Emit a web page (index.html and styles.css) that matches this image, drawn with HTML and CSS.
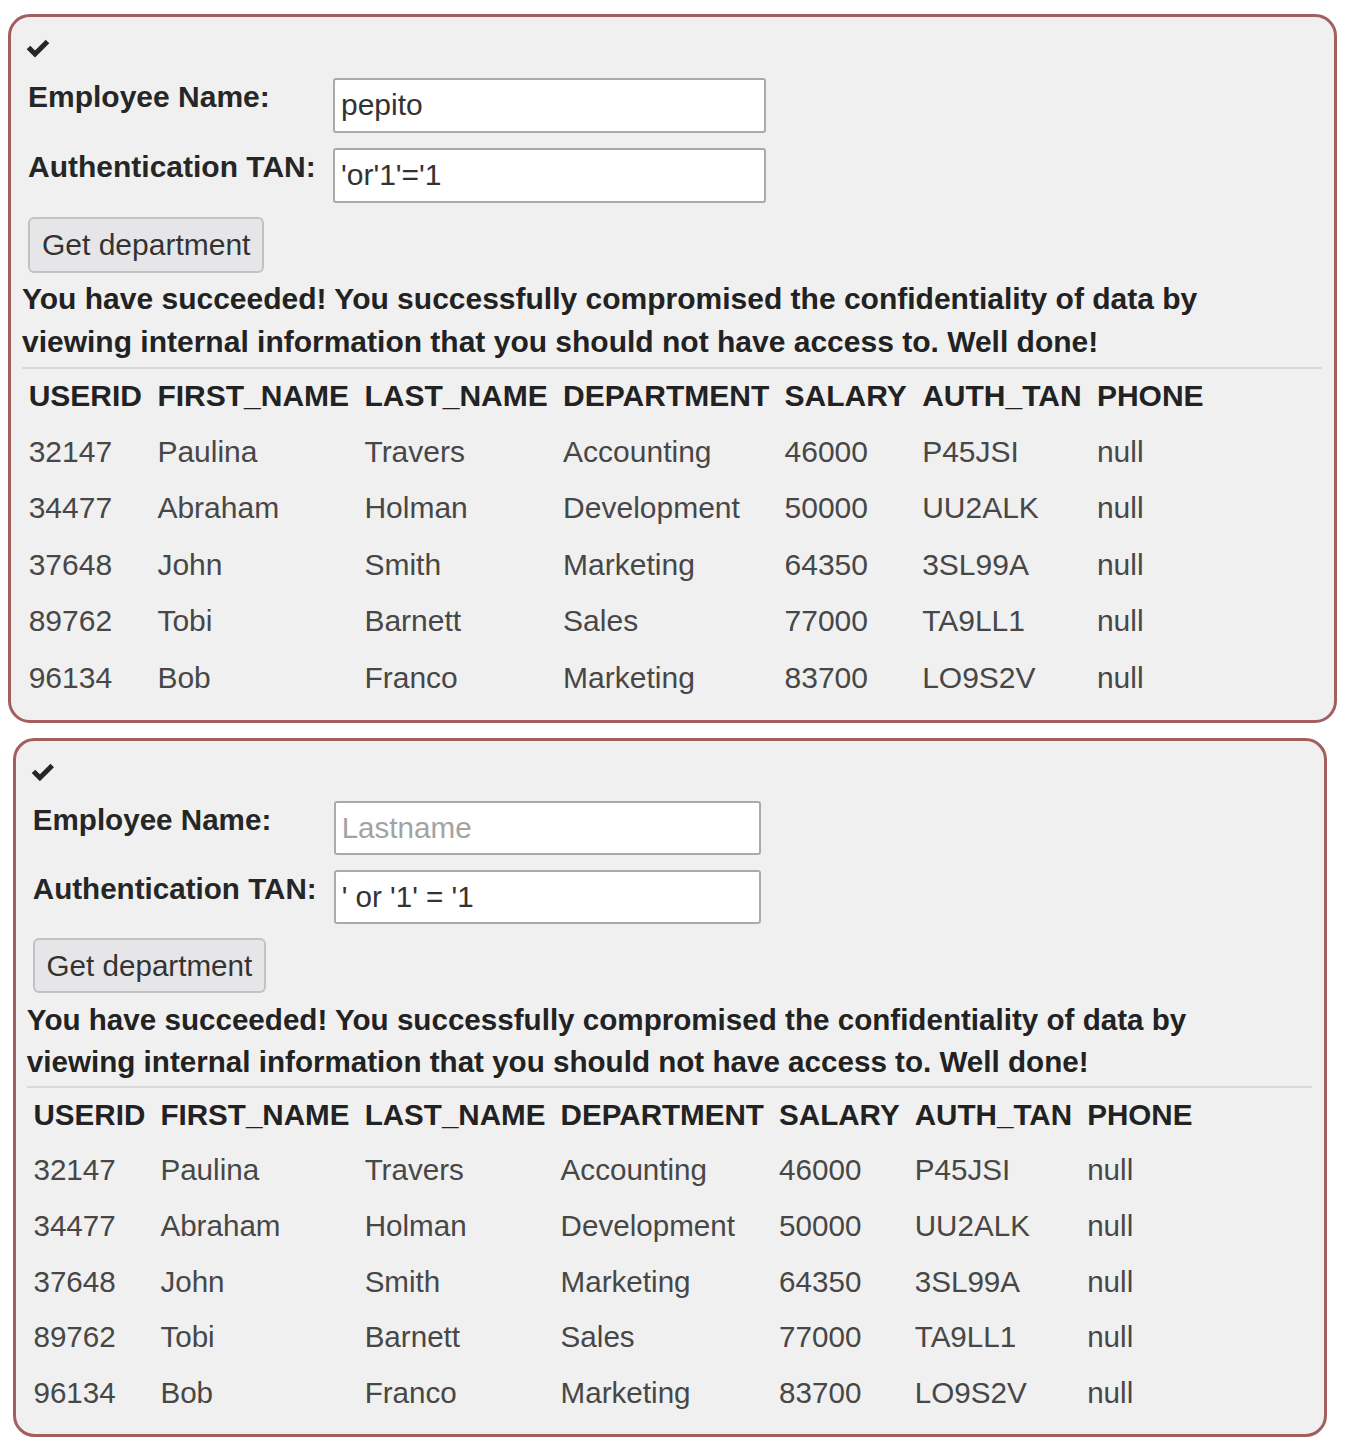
FILE: index.html
```html
<!DOCTYPE html>
<html lang="en">
<head>
<meta charset="utf-8">
<title>SQL Injection - Get department</title>
<link rel="stylesheet" href="styles.css">
</head>
<body>
<section class="panel panel-first">
  <svg class="check" viewBox="0 0 24 20" aria-hidden="true"><polyline points="2.5,9.5 9,16 21.5,3.5" fill="none" stroke="#262626" stroke-width="5" stroke-linejoin="miter"/></svg>
  <form class="form">
    <label class="label" for="n1">Employee Name:</label>
    <input class="field" id="n1" type="text" value="pepito" placeholder="Lastname">
    <label class="label" for="t1">Authentication TAN:</label>
    <input class="field" id="t1" type="text" value="'or'1'='1">
  </form>
  <button class="btn" type="button">Get department</button>
  <p class="msg">You have succeeded! You successfully compromised the confidentiality of data by viewing internal information that you should not have access to. Well done!</p>
  <hr class="rule">
  <table class="data">
    <thead>
      <tr><th>USERID</th><th>FIRST_NAME</th><th>LAST_NAME</th><th>DEPARTMENT</th><th>SALARY</th><th>AUTH_TAN</th><th>PHONE</th></tr>
    </thead>
    <tbody>
      <tr><td>32147</td><td>Paulina</td><td>Travers</td><td>Accounting</td><td>46000</td><td>P45JSI</td><td>null</td></tr>
      <tr><td>34477</td><td>Abraham</td><td>Holman</td><td>Development</td><td>50000</td><td>UU2ALK</td><td>null</td></tr>
      <tr><td>37648</td><td>John</td><td>Smith</td><td>Marketing</td><td>64350</td><td>3SL99A</td><td>null</td></tr>
      <tr><td>89762</td><td>Tobi</td><td>Barnett</td><td>Sales</td><td>77000</td><td>TA9LL1</td><td>null</td></tr>
      <tr><td>96134</td><td>Bob</td><td>Franco</td><td>Marketing</td><td>83700</td><td>LO9S2V</td><td>null</td></tr>
    </tbody>
  </table>
</section>

<section class="panel panel-second">
  <svg class="check" viewBox="0 0 24 20" aria-hidden="true"><polyline points="2.5,9.5 9,16 21.5,3.5" fill="none" stroke="#262626" stroke-width="5" stroke-linejoin="miter"/></svg>
  <form class="form">
    <label class="label" for="n2">Employee Name:</label>
    <input class="field" id="n2" type="text" placeholder="Lastname">
    <label class="label" for="t2">Authentication TAN:</label>
    <input class="field" id="t2" type="text" value="' or '1' = '1">
  </form>
  <button class="btn" type="button">Get department</button>
  <p class="msg">You have succeeded! You successfully compromised the confidentiality of data by viewing internal information that you should not have access to. Well done!</p>
  <hr class="rule">
  <table class="data">
    <thead>
      <tr><th>USERID</th><th>FIRST_NAME</th><th>LAST_NAME</th><th>DEPARTMENT</th><th>SALARY</th><th>AUTH_TAN</th><th>PHONE</th></tr>
    </thead>
    <tbody>
      <tr><td>32147</td><td>Paulina</td><td>Travers</td><td>Accounting</td><td>46000</td><td>P45JSI</td><td>null</td></tr>
      <tr><td>34477</td><td>Abraham</td><td>Holman</td><td>Development</td><td>50000</td><td>UU2ALK</td><td>null</td></tr>
      <tr><td>37648</td><td>John</td><td>Smith</td><td>Marketing</td><td>64350</td><td>3SL99A</td><td>null</td></tr>
      <tr><td>89762</td><td>Tobi</td><td>Barnett</td><td>Sales</td><td>77000</td><td>TA9LL1</td><td>null</td></tr>
      <tr><td>96134</td><td>Bob</td><td>Franco</td><td>Marketing</td><td>83700</td><td>LO9S2V</td><td>null</td></tr>
    </tbody>
  </table>
</section>
</body>
</html>
```

FILE: styles.css
```css
html, body {
  background: #ffffff;
}

body {
  margin: 8px;
  font-family: "Liberation Sans", Arial, Helvetica, sans-serif;
  color: #2a2a2a;
}

.panel {
  box-sizing: border-box;
  width: 44.3em;
  border: 3px solid #a35f5f;
  border-radius: 0.73em;
  background: #f0f0f0;
  padding: 0.7em 0.4em 0.417em 0.367em;
  display: flex;
  flex-direction: column;
  align-items: flex-start;
}

.panel-first {
  font-size: 30px;
  margin-top: 6px;
  padding-bottom: calc(0.417em + 1px);
}

.panel-second {
  font-size: 29.6px;
  margin-top: 15px;
  margin-left: 5px;
  width: 44.4em;
  padding-bottom: calc(0.417em + 1px);
}

.check {
  display: block;
  width: 0.8em;
  height: 0.667em;
  margin-left: 0.133em;
}

.form {
  margin: 0.667em 0 0 0;
  display: grid;
  grid-template-columns: 10.367em 14.43em;
  grid-auto-rows: 1.833em;
  row-gap: 0.5em;
}

.label {
  align-self: start;
  padding: 2px 0 0 0.2em;
  font-weight: bold;
  font-size: 1em;
  line-height: normal;
  color: #262626;
  white-space: nowrap;
}

.field {
  box-sizing: border-box;
  width: 100%;
  height: 100%;
  margin: 0;
  border: 2px solid #a9a9b0;
  border-radius: 3px;
  background: #ffffff;
  padding: 0 0.2em;
  font-family: inherit;
  font-size: 1em;
  color: #333333;
  outline: none;
}

.field::placeholder {
  color: #a3a3a3;
  opacity: 1;
}

.btn {
  box-sizing: border-box;
  margin: 0.467em 0 0 0.2em;
  width: 7.867em;
  height: 1.867em;
  padding: 0 0.4em;
  border: 2px solid #c2c2c6;
  border-radius: 6px;
  background: #e6e6e8;
  font-family: inherit;
  font-size: 1em;
  color: #333333;
  white-space: nowrap;
}

.msg {
  max-width: 40em;
  margin: 0.183em 0 0 0;
  font-weight: bold;
  font-size: 1em;
  line-height: 1.433em;
  color: #222222;
}

.rule {
  align-self: stretch;
  margin: 0.083em 0 0 0;
  border: 0;
  height: 2px;
  background: #d9d9d9;
}

.data {
  border-collapse: collapse;
  margin: 0 0 0 -0.033em;
  font-size: 1em;
}

.data th,
.data td {
  padding: 0 0.256em;
  text-align: left;
  white-space: nowrap;
  line-height: 1.15em;
}

.data th {
  height: 1.833em;
  font-weight: bold;
  color: #222222;
}

.data td {
  height: 1.883em;
  font-weight: normal;
  color: #474747;
}
```
